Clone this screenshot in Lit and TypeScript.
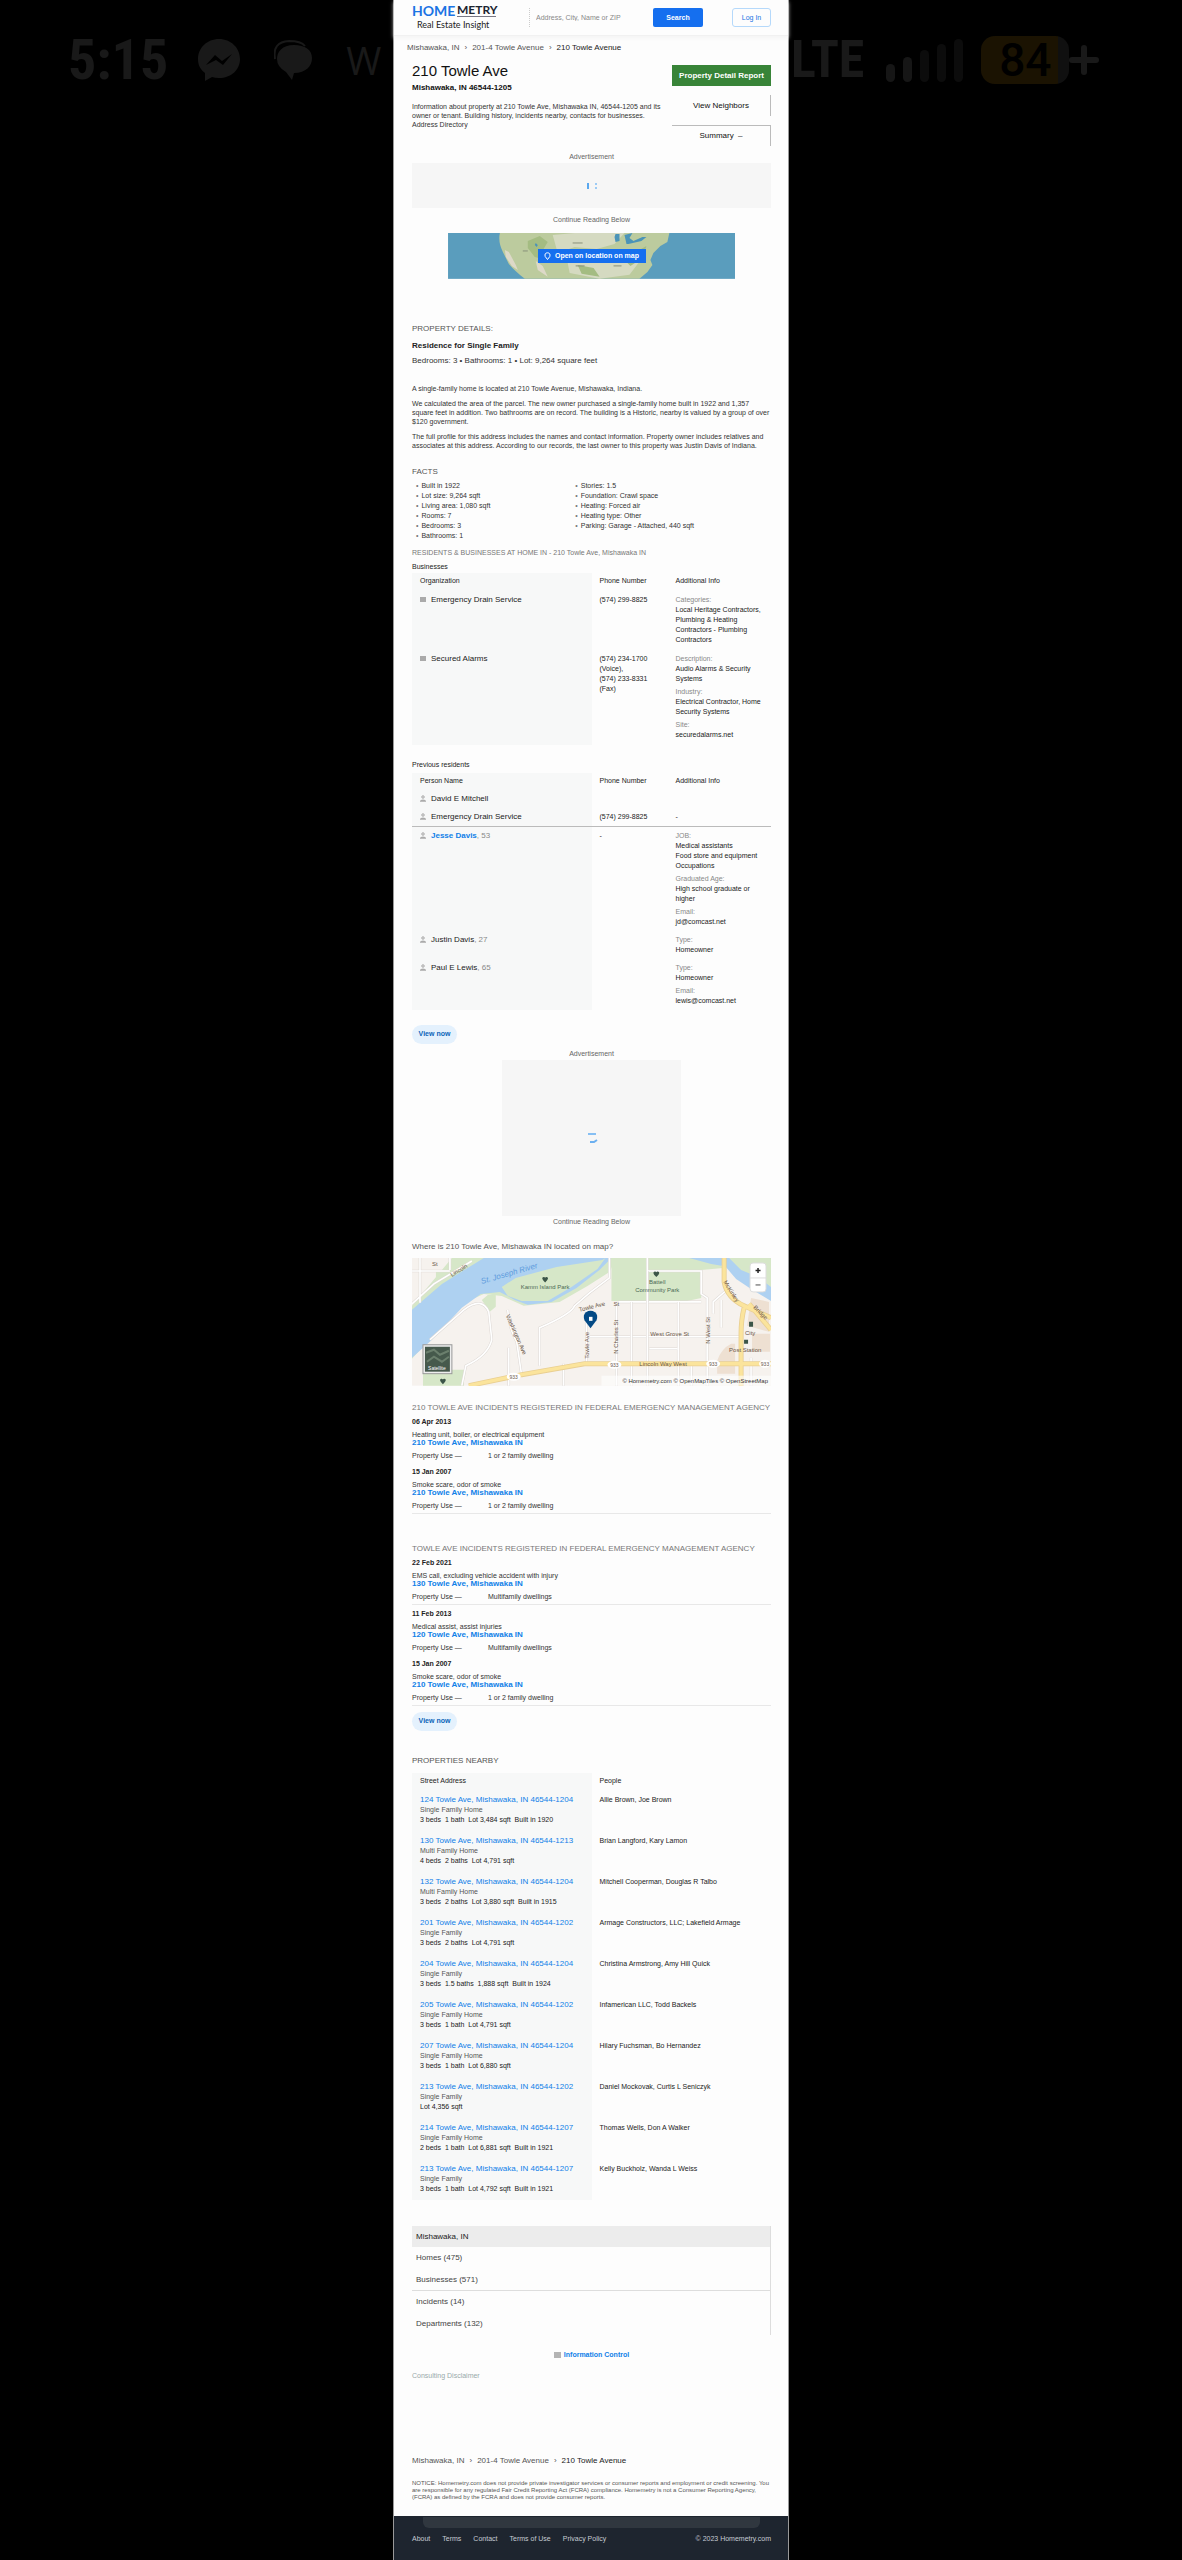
import { LitElement, html, svg, css, nothing } from "lit";
import { customElement } from "lit/decorators.js";

interface Info { label: string; lines: string[]; }
interface Org { name: string; phones: string[]; info: Info[]; }
interface Person { name: string; age?: string; phone?: string; info: Info[]; link?: boolean; ruled?: boolean; dash?: boolean; }
interface Incident { date: string; what: string; where: string; use: string; ruled?: boolean; }

const ORGS: Org[] = [
  { name: "Emergency Drain Service", phones: ["(574) 299-8825"], info: [
    { label: "Categories:", lines: ["Local Heritage Contractors,", "Plumbing & Heating", "Contractors - Plumbing", "Contractors"] }] },
  { name: "Secured Alarms", phones: ["(574) 234-1700", "(Voice),", "(574) 233-8331", "(Fax)"], info: [
    { label: "Description:", lines: ["Audio Alarms & Security", "Systems"] },
    { label: "Industry:", lines: ["Electrical Contractor, Home", "Security Systems"] },
    { label: "Site:", lines: ["securedalarms.net"] }] },
];

const PEOPLE: Person[] = [
  { name: "David E Mitchell", info: [] },
  { name: "Emergency Drain Service", phone: "(574) 299-8825", info: [], ruled: true, dash: true },
  { name: "Jesse Davis", age: "53", phone: "-", link: true, info: [
    { label: "JOB:", lines: ["Medical assistants", "Food store and equipment", "Occupations"] },
    { label: "Graduated Age:", lines: ["High school graduate or", "higher"] },
    { label: "Email:", lines: ["jd@comcast.net"] }] },
  { name: "Justin Davis", age: "27", info: [{ label: "Type:", lines: ["Homeowner"] }] },
  { name: "Paul E Lewis", age: "65", info: [
    { label: "Type:", lines: ["Homeowner"] },
    { label: "Email:", lines: ["lewis@comcast.net"] }] },
];

const HOUSE_INCIDENTS: Incident[] = [
  { date: "06 Apr 2013", what: "Heating unit, boiler, or electrical equipment", where: "210 Towle Ave, Mishawaka IN", use: "1 or 2 family dwelling" },
  { date: "15 Jan 2007", what: "Smoke scare, odor of smoke", where: "210 Towle Ave, Mishawaka IN", use: "1 or 2 family dwelling", ruled: true },
];

const STREET_INCIDENTS: Incident[] = [
  { date: "22 Feb 2021", what: "EMS call, excluding vehicle accident with injury", where: "130 Towle Ave, Mishawaka IN", use: "Multifamily dwellings", ruled: true },
  { date: "11 Feb 2013", what: "Medical assist, assist injuries", where: "120 Towle Ave, Mishawaka IN", use: "Multifamily dwellings" },
  { date: "15 Jan 2007", what: "Smoke scare, odor of smoke", where: "210 Towle Ave, Mishawaka IN", use: "1 or 2 family dwelling", ruled: true },
];

const NEARBY: [string, string, string, string][] = [
  ["124 Towle Ave, Mishawaka, IN 46544-1204", "Single Family Home", "3 beds  1 bath  Lot 3,484 sqft  Built in 1920", "Allie Brown, Joe Brown"],
  ["130 Towle Ave, Mishawaka, IN 46544-1213", "Multi Family Home", "4 beds  2 baths  Lot 4,791 sqft", "Brian Langford, Kary Lamon"],
  ["132 Towle Ave, Mishawaka, IN 46544-1204", "Multi Family Home", "3 beds  2 baths  Lot 3,880 sqft  Built in 1915", "Mitchell Cooperman, Douglas R Talbo"],
  ["201 Towle Ave, Mishawaka, IN 46544-1202", "Single Family", "3 beds  2 baths  Lot 4,791 sqft", "Armage Constructors, LLC; Lakefield Armage"],
  ["204 Towle Ave, Mishawaka, IN 46544-1204", "Single Family", "3 beds  1.5 baths  1,888 sqft  Built in 1924", "Christina Armstrong, Amy Hill Quick"],
  ["205 Towle Ave, Mishawaka, IN 46544-1202", "Single Family Home", "3 beds  1 bath  Lot 4,791 sqft", "Infamerican LLC, Todd Backels"],
  ["207 Towle Ave, Mishawaka, IN 46544-1204", "Single Family Home", "3 beds  1 bath  Lot 6,880 sqft", "Hilary Fuchsman, Bo Hernandez"],
  ["213 Towle Ave, Mishawaka, IN 46544-1202", "Single Family", "Lot 4,356 sqft", "Daniel Mockovak, Curtis L Seniczyk"],
  ["214 Towle Ave, Mishawaka, IN 46544-1207", "Single Family Home", "2 beds  1 bath  Lot 6,881 sqft  Built in 1921", "Thomas Wells, Don A Walker"],
  ["213 Towle Ave, Mishawaka, IN 46544-1207", "Single Family", "3 beds  1 bath  Lot 4,792 sqft  Built in 1921", "Kelly Buckholz, Wanda L Weiss"],
];

const FACTS_A = ["Built in 1922", "Lot size: 9,264 sqft", "Living area: 1,080 sqft", "Rooms: 7", "Bedrooms: 3", "Bathrooms: 1"];
const FACTS_B = ["Stories: 1.5", "Foundation: Crawl space", "Heating: Forced air", "Heating type: Other", "Parking: Garage - Attached, 440 sqft"];

@customElement("app-root")
export class AppRoot extends LitElement {
  static styles = css`
    :host { display: block; background: #000; color: #222; font: 7px/10px "Liberation Sans", Arial, sans-serif; }
    *, *::before, *::after { box-sizing: border-box; }
    h1, h2, h3, p, ul { margin: 0; padding: 0; font-weight: 400; }
    ul { list-style: none; }
    a { color: inherit; text-decoration: none; }
    button, input { font: inherit; color: inherit; margin: 0; padding: 0; border: 0; background: none; }
    svg { display: block; }
    .screen { display: grid; grid-template-columns: 393fr 396fr 393fr; }
    .status { display: flex; align-items: center; height: 120px; color: #191919; overflow: hidden; white-space: nowrap; min-width: 0; }
    .left { padding-left: 68px; }
    .right { padding-left: 2px; }
    .clock, .lte { font: 700 56px/60px "Liberation Sans Narrow", "Roboto Condensed", Roboto, sans-serif; }
    .lte { font-size: 52px; }
    .msgr { margin-left: 30px; }
    .chat { margin-left: 34px; }
    .dub { margin-left: 34px; font: 400 38px/44px "Open Sans", sans-serif; }
    .bars { display: flex; align-items: flex-end; gap: 8px; margin-left: 22px; }
    .bar { width: 9px; border-radius: 5px; background: #161616; }
    .b1 { height: 18px; } .b2 { height: 25px; } .b3 { height: 32px; background: #0c0c0c; }
    .b4 { height: 38px; background: #0c0c0c; } .b5 { height: 43px; background: #0c0c0c; }
    .battery { margin-left: 18px; display: flex; align-items: center; }
    .charge { width: 88px; height: 48px; border-radius: 14px; text-align: center; color: #000; font: 500 46px/48px Roboto, sans-serif; background: linear-gradient(90deg, #1b1302 88%, #101010 88%); }
    .phone { background: #fdfdfd; color: #333; min-width: 0; border-left: 1px solid #999; border-right: 1px solid #999; }
    .top { display: flex; align-items: center; height: 36px; padding: 0 17px 0 18px; border-bottom: 1px solid #f1f1f1; box-shadow: 0 2px 4px #f3f3f3; }
    .logo { width: 86px; }
    .find { display: flex; align-items: center; flex: 1; margin-left: 31px; gap: 8px; }
    .query { flex: 1; min-width: 0; height: 19px; padding-left: 6px; border-left: 1px dotted #ccc; }
    .query::placeholder { color: #888; opacity: 1; }
    .go { width: 50px; height: 19px; border-radius: 2px; background: #156fef; color: #fff; font-weight: 700; }
    .login { width: 39px; height: 19px; margin-left: 29px; border: 1px solid #b5d9fb; border-radius: 3px; color: #1b74e4; line-height: 17px; text-align: center; }
    .body { padding: 0 17px 0 18px; }
    .crumbs { display: flex; gap: 5px; font-size: 8px; color: #555; white-space: nowrap; }
    .first { margin-left: -5px; padding-top: 7px; }
    .last { color: #222; }
    .intro { display: flex; justify-content: space-between; padding-top: 9px; }
    .about { flex: 1; min-width: 0; }
    .name { font-size: 15px; line-height: 18px; color: #111; }
    .city { margin-top: 2px; font-size: 8px; line-height: 12px; font-weight: 700; color: #111; }
    .text { line-height: 9px; color: #333; }
    .about .text { margin-top: 8px; padding-right: 8px; }
    .actions { width: 99px; padding-top: 3px; display: flex; flex-direction: column; gap: 9px; }
    .act { height: 21px; font-size: 8px; text-align: center; color: #111; }
    .report { background: #388438; color: #fff; font-weight: 700; }
    .neigh { border-right: 1px solid #bbb; }
    .summ { border-right: 1px solid #bbb; border-top: 1px solid #bbb; }
    .ad { display: flex; flex-direction: column; align-items: center; color: #666; }
    .ad1 { padding-top: 6px; }
    .ad2 { padding-top: 5px; }
    .slot { display: flex; align-items: center; justify-content: center; background: #f6f6f6; }
    .wide { align-self: stretch; height: 45px; margin: 1px 0 7px; }
    .box { width: 50%; height: 156px; margin: 1px 0; }
    .hero { display: grid; place-items: center; width: 80%; margin: 8px auto 0; }
    .hero > * { grid-area: 1 / 1; }
    .hero svg { width: 100%; }
    .open { display: flex; align-items: center; justify-content: center; gap: 4px; width: 108px; height: 14px; background: #156fef; color: #fff; font-weight: 700; }
    .open svg { width: 7px; height: 8px; }
    .h { font-size: 8px; color: #555; }
    .h.caps { white-space: nowrap; color: #777; }
    .h.small { font-size: 7px; }
    .strong { font-size: 8px; font-weight: 700; color: #222; white-space: nowrap; }
    .mid { font-size: 8px; white-space: nowrap; }
    .mt4 { margin-top: 4px; } .mt5 { margin-top: 5px; } .mt6 { margin-top: 6px; } .mt7 { margin-top: 7px; }
    .mt15 { margin-top: 15px; } .mt17 { margin-top: 17px; } .mt18 { margin-top: 18px; }
    .mt25 { margin-top: 25px; } .mt30 { margin-top: 30px; } .mt45 { margin-top: 45px; }
    .sub { font-size: 7px; color: #222; }
    .facts { display: grid; grid-template-columns: 162fr 199fr; margin-top: 4px; padding-left: 4px; }
    .facts li::before { content: "•"; color: #777; margin-right: 3px; }
    table { width: 100%; border-collapse: collapse; table-layout: fixed; margin-top: 1px; }
    th, td { text-align: left; font-weight: 400; vertical-align: top; padding: 4px 0 4px 8px; color: #222; }
    th { padding-top: 3px; padding-bottom: 3px; }
    .c1 { width: 50%; background: #f7f8f8; }
    .c2 { width: 76px; }
    .people { margin-top: 3px; }
    .people th { padding-bottom: 4px; }
    .nm { display: flex; align-items: center; gap: 5px; font-size: 8px; }
    .nm svg { width: 6px; height: 7px; flex: none; }
    .blue { color: #1080e8; font-weight: 700; }
    .age { color: #888; font-weight: 400; }
    .info + .info { margin-top: 3px; }
    .info { white-space: nowrap; }
    .lab { color: #888; }
    .orgs td { padding-top: 6px; padding-bottom: 3px; }
    .orgs tr:last-child td { padding-bottom: 5px; }
    .ruled td { border-bottom: 1px solid #bbb; }
    .pill { display: block; width: 45px; height: 19px; border-radius: 10px; background: #e4f1fd; color: #0a63b8; font-weight: 700; }
    .map { width: 100%; margin-top: 6px; }
    .incident { padding-top: 4px; }
    .incident + .incident { padding-top: 6px; }
    .incident.line { padding-bottom: 2px; border-bottom: 1px solid #e8e8e8; }
    .incident.line + .incident { padding-top: 4px; }
    .date { font-weight: 700; color: #222; }
    .what { margin-top: 4px; line-height: 8px; }
    .where { display: block; font-size: 8px; line-height: 8px; font-weight: 700; color: #1080e8; }
    .use { display: grid; grid-template-columns: 76px 1fr; margin-top: 4px; }
    .near th { padding-bottom: 4px; }
    .near td { padding: 5px 0 6px 8px; }
    .near .blue { display: block; font-size: 8px; font-weight: 400; white-space: nowrap; }
    .kind { color: #555; }
    .meta { white-space: pre; }
    .places { margin-top: 26px; border-right: 1px solid #ddd; font-size: 8px; color: #444; }
    .places li { height: 22px; padding: 6px 4px; }
    .places .head { height: 21px; background: #ececec; color: #222; }
    .places .cut { border-bottom: 1px solid #ddd; }
    .control { display: flex; justify-content: center; align-items: center; gap: 3px; margin-top: 15px; }
    .sq { width: 7px; height: 6px; background: #b4b4b4; }
    .note { display: block; margin-top: 11px; color: #9aa; }
    .trail { margin-top: 75px; }
    .legal { margin-top: 14px; padding-bottom: 15px; font-size: 6px; line-height: 7px; color: #555; }
    .foot { background: #1e252f; color: #c5cbd3; height: 44px; padding: 1px 17px 0 18px; }
    .grip { height: 11px; margin: 0 11px 6px; border-radius: 0 0 6px 6px; background: #30373f; }
    .links { display: flex; gap: 12px; white-space: nowrap; }
    .copy { margin-left: auto; }
  `;

  private info(list: Info[]) {
    return list.map(i => html`<div class="info"><div class="lab">${i.label}</div>${i.lines.map(l => html`<div>${l}</div>`)}</div>`);
  }

  private person() {
    return html`<svg viewBox="0 0 6 7" aria-hidden="true"><circle cx="3" cy="2" r="1.3" fill="#ddd" stroke="#999" stroke-width=".7"/><path d="M0 6.800v-.9q.2-1.500 3-1.500t3 1.500v.9z" fill="#aaa"/></svg>`;
  }

  private crumbs(extra: string) {
    return html`<nav class="crumbs ${extra}"><a href="#">Mishawaka, IN</a><span>›</span><a href="#">201-4 Towle Avenue</a><span>›</span><span class="last">210 Towle Avenue</span></nav>`;
  }

  private incidents(list: Incident[]) {
    return list.map(i => html`<article class="incident ${i.ruled ? "line" : ""}">
      <div class="date">${i.date}</div><p class="what">${i.what}</p>
      <a class="where" href="#">${i.where}</a>
      <div class="use"><span>Property Use —</span><span>${i.use}</span></div></article>`);
  }

  private hero() {
    return html`<svg viewBox="0 0 288 46" role="img" aria-label="Map of the United States">
      <rect width="288" height="46" fill="#5a9dbd"/>
      <path d="M52 0Q50 9 55 19L61 31Q67 38 77 46H192L200 39 205 32 203 27 206 20 213 13 220 9 222 0z" fill="#bccb9e"/>
      <path d="M105 2l22-2h50l-10 11-18 5-22-2-17 6zM120 30l30-8 20 5 10-6 14 5-12 16-30 4-30-6z" fill="#d5dac1"/>
      <path d="M57 17l4 2 7 13 2 5-6-4-6-9zM88 28l7 5 5 11-10-7z" fill="#ddd9c8"/>
      <path d="M80 8l12-5 8 6-6 10 8 9-15-4-7-9zM176 26l14-8 9-5-4 12-12 8zM130 32l16 3 6 9-18-3z" fill="#a4bc82"/>
      <path d="M168 1l4 0v7l-4 1-1-5zM177 2l8-2-3 5 4 3 9-4 4 0-5 4-13 3-2 0zM88 10l2 2-1 2-2-2z" fill="#4b94b8"/>
      <path d="M75 18h5M125 10h10M166 33h8M128 33h9" stroke="#899179" stroke-width="1"/>
    </svg>`;
  }

  private map() {
    const street = (d: string) => svg`<path d=${d} fill="none" stroke="#ddd8d4" stroke-width="2.6"/><path d=${d} fill="none" stroke="#fff" stroke-width="1.6"/>`;
    return html`<svg class="map" viewBox="0 0 360 128" role="img" aria-label="Street map" font-family="Liberation Sans, sans-serif" font-size="6" fill="#6a5648">
      <rect width="360" height="128" fill="#f6f2ee"/>
      <path d="M40 0H205L198 14 176 28 148 44 112 48 90 38 72 36 50 46 0 101V48z" fill="#d6e7c8"/>
      <path d="M0 100V52L30 26 72 0H200L188 12 165 30 140 44 116 47 103 42 88 34 69 36 50 50 20 82z" fill="#aed1f1"/>
      <path d="M90 29L104 20 145 9 191 2 194 0 186 11 160 29 136 43H110L96 38z" fill="#d6e7c8"/>
      <path d="M200 0h104l8 10-22 2v28l-14 3H200zM76 37h8v12l-6 5-8-12zM11 112h41v16H11zM24 13h14v8H24z" fill="#d6e7c8"/>
      <path d="M277 0h40l10 10 14 14 19 10V0z" fill="#d6e7c8"/><path d="M278 0l22 6 12 2V0zM313 0h5l12 12 17 7 13 10v14l-20-12-15-10-12-14z" fill="#aed1f1"/>
      <path d="M320 86q-10 5-14 17v13h18V86zM340 40l18 4v30l-22-6zM341 76h18v18h-18z" fill="#eee0d2"/>
      ${street("M8 0V45M0 13H38M0 46L22 26 60 3M38 0V12")}
      ${street("M18 82L52 52Q70 38 77 54L80 82Q76 98 54 108L50 128M96 52Q97 70 105 84L110 118M97 90V128")}
      ${street("M128 108V70Q160 56 163 48L178 35 198 20V0M205 46V128M175 60V106M178 79H330M207 44H290")}
      ${street("M236 0V128M236 13H290V36L296 40V128M267 44V106M238 91H266M220 44V128M152 106V128M267 106V128M310 42V70M340 100V128")}
      ${street("M236 13V44M302 56V44L318 30M280 128V106")}
      <path d="M57 128L110 117 173 106H360M313 0V24Q316 40 333 48L360 60M333 50Q330 62 330 76V128M338 46L360 72" fill="none" stroke="#e9cf92" stroke-width="5"/>
      <path d="M57 128L110 117 173 106H360M313 0V24Q316 40 333 48L360 60M333 50Q330 62 330 76V128M338 46L360 72" fill="none" stroke="#fbe49c" stroke-width="3.4"/>
      <g fill="#fff"><ellipse cx="102" cy="119" rx="7" ry="4"/><ellipse cx="203" cy="107" rx="7" ry="4"/><ellipse cx="302" cy="106" rx="7" ry="4"/><ellipse cx="354" cy="106" rx="6" ry="4"/></g>
      <g font-size="5" text-anchor="middle"><text x="102" y="121">933</text><text x="203" y="109">933</text><text x="302" y="108">933</text><text x="354" y="108">933</text></g>
      <g fill="#3c5548"><path d="M133.500 24.500q-5-4.500-1.500-5.500 1-.2 1.500.8.500-1 1.500-.8 3.500 1-1.500 5.500zM245 19q-5-4.500-1.500-5.500 1-.2 1.500.8.500-1 1.500-.8 3.500 1-1.500 5.500zM31 126.500q-5-4.500-1.500-5.500 1-.2 1.500.8.500-1 1.500-.8 3.500 1-1.500 5.500z"/><path d="M338 64h4v5h-4zM333 82h4v4h-4z"/></g>
      <text x="70" y="26" font-size="8" font-style="italic" fill="#5d9bdd" transform="rotate(-16 70 26)">St. Joseph River</text>
      <text x="109" y="31" fill="#4d6a56">Kamm Island Park</text>
      <g text-anchor="middle" fill="#4d6a56"><text x="246" y="26">Battell</text><text x="246" y="34">Community Park</text></g>
      <text x="168" y="54" transform="rotate(-14 168 54)">Towle Ave</text><text x="202" y="48">St</text>
      <text x="40" y="19" transform="rotate(-32 40 19)">Lincoln</text><text x="20" y="8">St</text>
      <text transform="translate(94 58) rotate(66)">Washington Ave</text>
      <text transform="translate(177 101) rotate(-90)">Towle Ave</text><text transform="translate(207 96) rotate(-90)">N Charles St</text><text transform="translate(299 86) rotate(-90)">N West St</text>
      <text x="239" y="78">West Grove St</text><text x="228" y="108">Lincoln Way West</text>
      <text transform="translate(312 24) rotate(58)">McKinley</text><text transform="translate(342 50) rotate(45)">Bridge</text>
      <text x="334" y="77">City</text><text x="318" y="94">Post Station</text>
      <rect x="190" y="118" width="170" height="10" fill="#fff" opacity=".6"/>
      <text x="357" y="125" text-anchor="end" fill="#333">© Homemetry.com © OpenMapTiles © OpenStreetMap</text>
      <rect x="11" y="87" width="29" height="29" fill="#eee" stroke="#999"/><rect x="13" y="89" width="25" height="25" fill="#46594c"/>
      <path d="M14 95l8-3 6 5 9-4M15 104l7-5 8 5 7-5" stroke="#6b7f6d" stroke-width="2" fill="none"/><text x="25" y="112" font-size="5" text-anchor="middle" fill="#fff">Satellite</text>
      <path d="M179 70.500L173 62.500Q171 57 174.500 54.500 179 51.500 183.500 54.500 187 57 185 62.500z" fill="#034a85"/><rect x="177.500" y="59" width="3.500" height="4" fill="#fff"/>
      <rect x="339" y="5" width="16" height="29" rx="3" fill="#fff" stroke="#ddd"/><path d="M339 20h16" stroke="#ddd"/><path d="M344.500 12.500h5M347 10v5" stroke="#222" stroke-width="1.500"/><path d="M344.500 27h5" stroke="#888" stroke-width="1.500"/>
    </svg>`;
  }

  render() {
    return html`<div class="screen">
      <div class="status left">
        <span class="clock">5:15</span>
        <svg class="msgr" width="42" height="42" viewBox="0 0 42 42" aria-hidden="true"><path d="M21 0C9 0 0 9 0 20c0 7 3 11 7 14v8l7-4q3 1 7 1c12 0 21-8 21-19S33 0 21 0z" fill="#191919"/><path d="M8 26L17 16l7 6 10-7-9 11-7-5z" fill="#000"/></svg>
        <svg class="chat" width="38" height="40" viewBox="0 0 38 40" aria-hidden="true"><path d="M1 19Q-2 2 15 1q12 0 16 5" fill="none" stroke="#191919" stroke-width="2"/><path d="M20 5C8 5 3 12 3 19q0 8 9 13l6 8 2-7c12 0 18-7 18-15S31 5 20 5z" fill="#191919"/></svg>
        <span class="dub">W</span>
      </div>
      <div class="phone">
        <header class="top">
          <svg class="logo" viewBox="0 0 86 36" role="img" aria-label="Homemetry" font-family="Lato, sans-serif">
            <text x="0" y="16" font-size="14" font-weight="700" fill="#1b74e4">HOME</text><text x="45" y="14" font-size="12" font-weight="700" fill="#1c2430">METRY</text>
            <path d="M45 16.500H84" stroke="#556" stroke-width=".8"/><text x="5" y="28" font-size="9" fill="#222">Real Estate Insight</text>
          </svg>
          <form class="find"><input class="query" aria-label="Search" placeholder="Address, City, Name or ZIP"><button class="go" type="button">Search</button></form>
          <a class="login" href="#">Log In</a>
        </header>
        <main class="body">
          <div>${this.crumbs("first")}</div>
          <section class="intro">
            <div class="about"><h1 class="name">210 Towle Ave</h1><p class="city">Mishawaka, IN 46544-1205</p>
              <p class="text">Information about property at 210 Towle Ave, Mishawaka IN, 46544-1205 and its owner or tenant. Building history, incidents nearby, contacts for businesses. Address Directory</p></div>
            <div class="actions"><button class="act report">Property Detail Report</button><button class="act neigh">View Neighbors</button><button class="act summ">Summary &nbsp;–</button></div>
          </section>
          <aside class="ad ad1"><span>Advertisement</span><div class="slot wide"><svg width="12" height="8" viewBox="0 0 12 8" aria-hidden="true"><rect x="1" y="1" width="2" height="6" fill="#5ba8ee"/><path d="M9 1h2v2H9zM9 5h2v2H9z" fill="#9ccbf5"/></svg></div><span>Continue Reading Below</span></aside>
          <div class="hero">${this.hero()}<button class="open"><svg viewBox="0 0 7 8" aria-hidden="true"><path d="M3.500 7.500L1.200 4.500Q.2 1 3.500.8 6.800 1 5.800 4.500z" fill="none" stroke="#fff"/></svg>Open on location on map</button></div>

          <h2 class="h mt45">PROPERTY DETAILS:</h2>
          <p class="strong mt7">Residence for Single Family</p>
          <p class="mid mt5">Bedrooms: 3 • Bathrooms: 1 • Lot: 9,264 square feet</p>
          <p class="text mt18">A single-family home is located at 210 Towle Avenue, Mishawaka, Indiana.</p>
          <p class="text mt6">We calculated the area of the parcel. The new owner purchased a single-family home built in 1922 and 1,357 square feet in addition. Two bathrooms are on record. The building is a Historic, nearby is valued by a group of over $120 government.</p>
          <p class="text mt6">The full profile for this address includes the names and contact information. Property owner includes relatives and associates at this address. According to our records, the last owner to this property was Justin Davis of Indiana.</p>
          <h2 class="h mt17">FACTS</h2>
          <div class="facts"><ul>${FACTS_A.map(f => html`<li>${f}</li>`)}</ul><ul>${FACTS_B.map(f => html`<li>${f}</li>`)}</ul></div>
          <h2 class="h caps small mt7">RESIDENTS &amp; BUSINESSES AT HOME IN - 210 Towle Ave, Mishawaka IN</h2>
          <h3 class="sub mt4">Businesses</h3>
          <table class="orgs"><thead><tr><th class="c1">Organization</th><th class="c2">Phone Number</th><th>Additional Info</th></tr></thead>
            <tbody>${ORGS.map(o => html`<tr><td class="c1"><div class="nm"><svg viewBox="0 0 6 7" aria-hidden="true"><rect y="1" width="6" height="5" fill="#aaa"/></svg>${o.name}</div></td><td>${o.phones.map(p => html`<div>${p}</div>`)}</td><td>${this.info(o.info)}</td></tr>`)}</tbody></table>
          <h3 class="sub mt15">Previous residents</h3>
          <table class="people"><thead><tr><th class="c1">Person Name</th><th class="c2">Phone Number</th><th>Additional Info</th></tr></thead>
            <tbody>${PEOPLE.map(p => html`<tr class=${p.ruled ? "ruled" : ""}><td class="c1"><div class="nm">${this.person()}<span>${p.link ? html`<a class="blue" href="#">${p.name}</a>` : p.name}${p.age ? html`<span class="age">, ${p.age}</span>` : nothing}</span></div></td><td>${p.phone ?? nothing}</td><td>${p.dash ? "-" : this.info(p.info)}</td></tr>`)}</tbody></table>
          <button class="pill mt15">View now</button>
          <aside class="ad ad2"><span>Advertisement</span><div class="slot box"><svg width="12" height="12" viewBox="0 0 12 12" aria-hidden="true"><path d="M2 2h8" stroke="#86bff3" stroke-width="2"/><path d="M4 10h4l3-2" stroke="#6cb0f0" stroke-width="2" fill="none"/></svg></div><span>Continue Reading Below</span></aside>
          <h2 class="h mt15">Where is 210 Towle Ave, Mishawaka IN located on map?</h2>
          ${this.map()}
          <h2 class="h caps mt17">210 TOWLE AVE INCIDENTS REGISTERED IN FEDERAL EMERGENCY MANAGEMENT AGENCY</h2>
          <section>${this.incidents(HOUSE_INCIDENTS)}</section>
          <h2 class="h caps mt30">TOWLE AVE INCIDENTS REGISTERED IN FEDERAL EMERGENCY MANAGEMENT AGENCY</h2>
          <section>${this.incidents(STREET_INCIDENTS)}</section>
          <button class="pill mt6">View now</button>
          <h2 class="h mt25">PROPERTIES NEARBY</h2>
          <table class="near mt7"><thead><tr><th class="c1">Street Address</th><th>People</th></tr></thead>
            <tbody>${NEARBY.map(n => html`<tr><td class="c1"><a class="blue" href="#">${n[0]}</a><div class="kind">${n[1]}</div><div class="meta">${n[2]}</div></td><td>${n[3]}</td></tr>`)}</tbody></table>
          <ul class="places"><li class="head">Mishawaka, IN</li><li>Homes (475)</li><li class="cut">Businesses (571)</li><li>Incidents (14)</li><li>Departments (132)</li></ul>
          <div class="control"><span class="sq"></span><a class="blue" href="#">Information Control</a></div>
          <a class="note" href="#">Consulting Disclaimer</a>
          <div class="trail">${this.crumbs("")}</div>
          <p class="legal">NOTICE: Homemetry.com does not provide private investigator services or consumer reports and employment or credit screening. You are responsible for any regulated Fair Credit Reporting Act (FCRA) compliance. Homemetry is not a Consumer Reporting Agency, (FCRA) as defined by the FCRA and does not provide consumer reports.</p>
        </main>
        <footer class="foot"><div class="grip"></div><nav class="links"><a href="#">About</a><a href="#">Terms</a><a href="#">Contact</a><a href="#">Terms of Use</a><a href="#">Privacy Policy</a><span class="copy">© 2023 Homemetry.com</span></nav></footer>
      </div>
      <div class="status right">
        <span class="lte">LTE</span>
        <div class="bars"><i class="bar b1"></i><i class="bar b2"></i><i class="bar b3"></i><i class="bar b4"></i><i class="bar b5"></i></div>
        <div class="battery"><div class="charge">84</div><svg width="30" height="32" viewBox="0 0 30 32" aria-hidden="true"><path d="M3 16h24M15 4v24" stroke="#191919" stroke-width="6" stroke-linecap="round"/></svg></div>
      </div>
    </div>`;
  }
}
